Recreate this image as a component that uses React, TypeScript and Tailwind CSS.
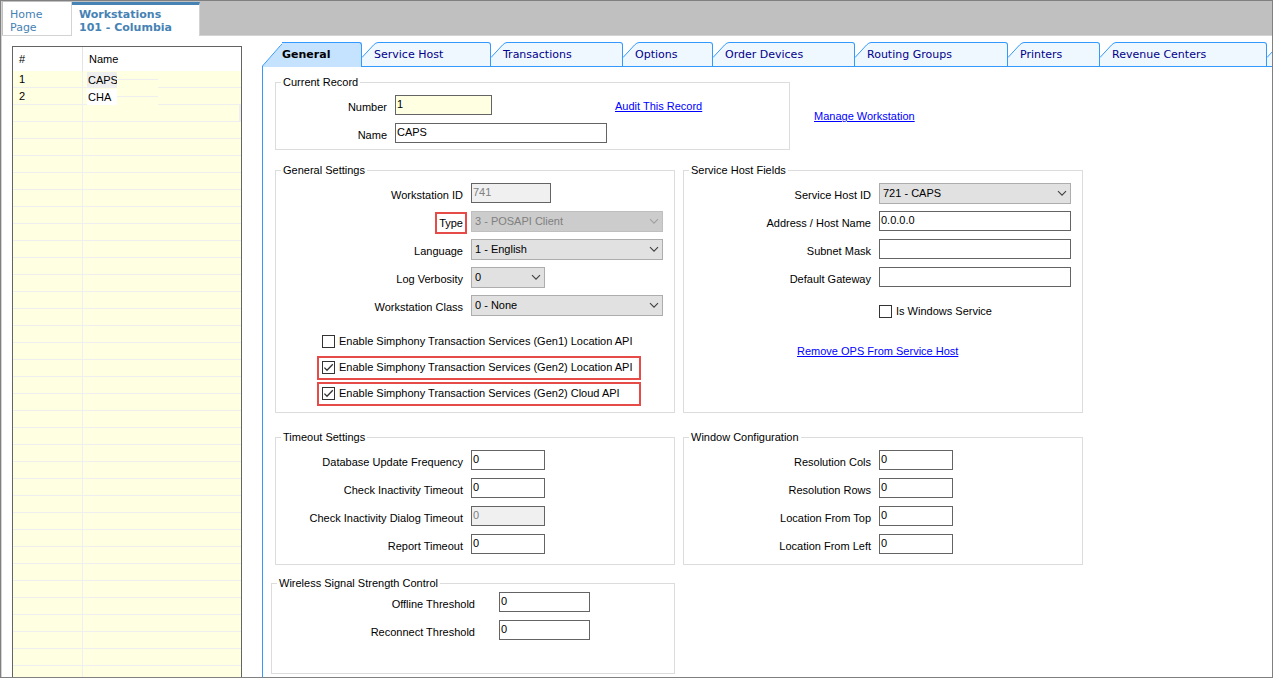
import React, { useState } from 'react';
import clsx from 'clsx';

const TABS = [
  { label: 'Service Host', width: 'w-[129px]' },
  { label: 'Transactions', width: 'w-[132px]' },
  { label: 'Options', width: 'w-[90px]' },
  { label: 'Order Devices', width: 'w-[142px]' },
  { label: 'Routing Groups', width: 'w-[153px]' },
  { label: 'Printers', width: 'w-[92px]' },
  { label: 'Revenue Centers', width: 'w-[167px]' },
  { label: '', width: 'w-[129px]' },
];

const RECORDS = ['CAPS', 'CHA'];
const GRID_ROWS = 60;

function Group({ title, className, children }: { title: string; className?: string; children: React.ReactNode }) {
  return (
    <fieldset className={clsx('min-w-0 border border-[#dcdcdc]', className)}>
      <legend className="ml-[5px] px-0.5 h-3.5 leading-[14px]">{title}</legend>
      {children}
    </fieldset>
  );
}

function Row({
  label, id, cols = 'grid-cols-[187px_1fr] gap-2', highlight, children,
}: {
  label: string;
  id: string;
  cols?: string;
  highlight?: boolean;
  children: React.ReactNode;
}) {
  return (
    <div className={clsx('grid h-5', cols)}>
      <label htmlFor={id} className="pt-[5px] text-right leading-[14px] whitespace-nowrap">
        <span className={clsx('inline-block', highlight && 'outline-2 outline-offset-2 outline-[#e64b47]')}>{label}</span>
      </label>
      {children}
    </div>
  );
}

function TextBox({ id, value = '', width, disabled, tint = 'bg-white' }: {
  id: string;
  value?: string;
  width: string;
  disabled?: boolean;
  tint?: string;
}) {
  return (
    <input
      id={id}
      type="text"
      defaultValue={value}
      disabled={disabled}
      className={clsx(
        'h-5 border border-[#646464] pl-px pb-0.5 outline-none',
        width,
        disabled ? 'bg-[#f0f0f0] text-[#808080]' : tint,
      )}
    />
  );
}

function DropDown({ id, value, width, disabled }: { id: string; value: string; width: string; disabled?: boolean }) {
  return (
    <div className={clsx('relative h-[21px]', width)}>
      <select
        id={id}
        disabled={disabled}
        className={clsx(
          'h-[21px] w-full appearance-none border pl-[3px] outline-none',
          disabled ? 'border-[#bfbfbf] bg-[#cccccc] text-[#808080] opacity-100' : 'border-[#adadad] bg-[#e1e1e1]',
        )}
      >
        <option>{value}</option>
      </select>
      <svg
        className={clsx('pointer-events-none absolute right-1 top-[7px]', disabled ? 'text-[#a0a0a0]' : 'text-[#404040]')}
        width="10" height="7" viewBox="0 0 10 7" fill="none" stroke="currentColor" strokeWidth="1.1"
      >
        <path d="M1 1.2 L5 5.2 L9 1.2" />
      </svg>
    </div>
  );
}

function CheckBox({ label, checked, className }: { label: string; checked?: boolean; className?: string }) {
  const [on, setOn] = useState(!!checked);
  return (
    <label className={clsx('flex items-center whitespace-nowrap', className)}>
      <span className="relative mr-1 h-[13px] w-[13px]">
        <input
          type="checkbox"
          checked={on}
          onChange={() => setOn(v => !v)}
          className="block h-[13px] w-[13px] appearance-none border border-[#333333] bg-white"
        />
        {on && (
          <svg className="pointer-events-none absolute inset-0" width="13" height="13" viewBox="0 0 13 13" fill="none" stroke="#333333" strokeWidth="1.3">
            <path d="M2.4 6.6 L5 9.2 L10.8 3.2" />
          </svg>
        )}
      </span>
      {label}
    </label>
  );
}

function RecordGrid() {
  return (
    <div className="ml-[10px] mt-[10px] w-[230px] shrink-0 overflow-hidden border border-b-0 border-[#646464] bg-[#ffffe1]">
      <table className="w-full table-fixed border-separate border-spacing-0">
        <thead>
          <tr className="h-6 bg-white">
            <th className="w-[70px] border-r border-[#e4e4e4] pl-1.5 text-left font-normal">#</th>
            <th className="pl-1.5 text-left font-normal">Name</th>
          </tr>
        </thead>
        <tbody>
          {Array.from({ length: GRID_ROWS }, (_, i) => (
            <tr key={i} className="h-[17px]">
              <td className="h-[17px] border-b border-r border-[#efefef] p-0 pl-1.5 leading-4">{RECORDS[i] && i + 1}</td>
              <td className={clsx('h-[17px] border-b border-[#efefef] p-0', i === 2 && 'border-r-2')}>
                {RECORDS[i] && (
                  <div className="relative z-10 -mb-px ml-1 flex h-[17px]">
                    <span className={clsx('mt-px w-[30px] pl-px leading-4', i === 0 ? 'bg-[#efefef]' : 'bg-white')}>
                      {RECORDS[i]}
                    </span>
                    <span className="w-[41px] bg-[#ffffe1]">
                      <span className="block h-[9px] border-b border-[#efefef]" />
                    </span>
                  </div>
                )}
              </td>
            </tr>
          ))}
        </tbody>
      </table>
    </div>
  );
}

function TabStrip() {
  return (
    <div role="tablist" className="flex h-[25px] overflow-hidden font-['DejaVu_Sans','Verdana',sans-serif] text-[11px] text-[#00008b]">
      <button role="tab" aria-selected="true" className="flex h-[25px] w-[100px] shrink-0 text-left font-bold text-black">
        <svg className="shrink-0" width="24" height="25" viewBox="0 0 24 25">
          <path d="M0 25 L19 3.5 Q21.5 .5 24 .5 V25 Z" fill="#c5e2ff" />
          <path d="M.5 25 V24 L18.5 3.5 Q21 .5 24 .5" fill="none" stroke="#3399ff" />
        </svg>
        <span className="-ml-1 h-full flex-1 rounded-tr-[3px] border-r border-t border-[#3399ff] bg-[#c5e2ff] leading-[23px]">General</span>
      </button>
      {TABS.map((tab, i) => (
        <button key={i} role="tab" aria-selected="false" aria-label={tab.label || 'More'} className={clsx('flex h-[25px] shrink-0 text-left', tab.width)}>
          <svg className="shrink-0" width="16" height="25" viewBox="0 0 16 25">
            <path d="M0 15.5 L11.5 3 Q14 .5 16 .5 V25 H0 Z" fill="#eff7ff" />
            <path d="M0 15.5 L11.5 3 Q14 .5 16 .5" fill="none" stroke="#3399ff" />
            <path d="M0 24.5 H16" stroke="#3399ff" />
          </svg>
          <span className="h-full flex-1 rounded-tr-[3px] border-b border-r border-t border-[#3399ff] bg-[#eff7ff] leading-[23px] whitespace-nowrap">
            <span className="-ml-1">{tab.label}</span>
          </span>
        </button>
      ))}
      <span className="flex-1 border-b border-[#3399ff]" />
    </div>
  );
}

export default function App() {
  const link = 'text-[#0000ff] underline';

  return (
    <div className="flex h-screen flex-col border border-[#808080] bg-white font-['Liberation_Sans',Arial,sans-serif] text-[11px] text-black">
      <nav className="flex h-[35px] shrink-0 border-b border-l border-[#d3d3d3] bg-[#c0c0c0] pt-px font-['DejaVu_Sans','Verdana',sans-serif] leading-[13px] text-[#4682b4]">
        <a href="#home" className="ml-px w-[69px] border-r border-[#d3d3d3] bg-white pl-[7px] pt-1.5">
          Home<br />Page
        </a>
        <a href="#workstations" className="-mb-px w-32 border-r border-t-3 border-r-[#d3d3d3] border-t-[#4682b4] bg-white pl-[7px] pt-[3px] font-bold">
          Workstations<br />101 - Columbia
        </a>
      </nav>

      <div className="flex min-h-0 flex-1 border-l border-[#d3d3d3]">
        <RecordGrid />

        <main className="ml-5 mt-1.5 flex min-w-0 flex-1 flex-col">
          <TabStrip />

          <div className="min-h-0 flex-1 overflow-hidden border-l border-[#3399ff] pl-3 pt-2">
            <div className="flex">
              <Group title="Current Record" className="w-[515px]">
                <div className="flex pb-1.5 pt-1.5">
                  <div className="flex w-[331px] flex-col gap-2">
                    <Row label="Number" id="number" cols="grid-cols-[111px_1fr] gap-2">
                      <TextBox id="number" value="1" width="w-[97px]" tint="bg-[#ffffe1]" />
                    </Row>
                    <Row label="Name" id="name" cols="grid-cols-[111px_1fr] gap-2">
                      <TextBox id="name" value="CAPS" width="w-[212px]" />
                    </Row>
                  </div>
                  <a href="#audit" className={clsx('ml-2 pt-[3px]', link)}>Audit This Record</a>
                </div>
              </Group>
              <a href="#manage" className={clsx('ml-6 self-center pt-2', link)}>Manage Workstation</a>
            </div>

            <div className="mt-[13px] grid max-w-[808px] grid-cols-2 gap-x-2 gap-y-[17px]">
              <Group title="General Settings">
                <div className="flex flex-col gap-2 pt-1.5">
                  <Row label="Workstation ID" id="ws-id">
                    <TextBox id="ws-id" value="741" width="w-20" disabled />
                  </Row>
                  <Row label="Type" id="type" highlight>
                    <DropDown id="type" value="3 - POSAPI Client" width="w-48" disabled />
                  </Row>
                  <Row label="Language" id="language">
                    <DropDown id="language" value="1 - English" width="w-48" />
                  </Row>
                  <Row label="Log Verbosity" id="verbosity">
                    <DropDown id="verbosity" value="0" width="w-[74px]" />
                  </Row>
                  <Row label="Workstation Class" id="ws-class">
                    <DropDown id="ws-class" value="0 - None" width="w-48" />
                  </Row>
                </div>
                <div className="ml-[41px] mt-[15px] flex w-[324px] flex-col gap-0.5 pb-1.5">
                  <CheckBox label="Enable Simphony Transaction Services (Gen1) Location API" className="h-6 border-2 border-transparent pb-px pl-[3px]" />
                  <CheckBox label="Enable Simphony Transaction Services (Gen2) Location API" checked className="h-6 border-2 border-[#e64b47] pb-px pl-[3px]" />
                  <CheckBox label="Enable Simphony Transaction Services (Gen2) Cloud API" checked className="h-6 border-2 border-[#e64b47] pb-px pl-[3px]" />
                </div>
              </Group>

              <Group title="Service Host Fields">
                <div className="flex flex-col gap-2 pt-1.5">
                  <Row label="Service Host ID" id="host-id">
                    <DropDown id="host-id" value="721 - CAPS" width="w-48" />
                  </Row>
                  <Row label="Address / Host Name" id="host-name">
                    <TextBox id="host-name" value="0.0.0.0" width="w-48" />
                  </Row>
                  <Row label="Subnet Mask" id="subnet">
                    <TextBox id="subnet" width="w-48" />
                  </Row>
                  <Row label="Default Gateway" id="gateway">
                    <TextBox id="gateway" width="w-48" />
                  </Row>
                </div>
                <CheckBox label="Is Windows Service" className="ml-[195px] mt-4 h-4" />
                <a href="#remove-ops" className={clsx('ml-[113px] mt-6 inline-block', link)}>Remove OPS From Service Host</a>
              </Group>

              <Group title="Timeout Settings">
                <div className="flex flex-col gap-2 pb-2.5 pt-1.5">
                  <Row label="Database Update Frequency" id="db-freq">
                    <TextBox id="db-freq" value="0" width="w-[74px]" />
                  </Row>
                  <Row label="Check Inactivity Timeout" id="inactivity">
                    <TextBox id="inactivity" value="0" width="w-[74px]" />
                  </Row>
                  <Row label="Check Inactivity Dialog Timeout" id="inactivity-dialog">
                    <TextBox id="inactivity-dialog" value="0" width="w-[74px]" disabled />
                  </Row>
                  <Row label="Report Timeout" id="report">
                    <TextBox id="report" value="0" width="w-[74px]" />
                  </Row>
                </div>
              </Group>

              <Group title="Window Configuration">
                <div className="flex flex-col gap-2 pb-2.5 pt-1.5">
                  <Row label="Resolution Cols" id="res-cols">
                    <TextBox id="res-cols" value="0" width="w-[74px]" />
                  </Row>
                  <Row label="Resolution Rows" id="res-rows">
                    <TextBox id="res-rows" value="0" width="w-[74px]" />
                  </Row>
                  <Row label="Location From Top" id="loc-top">
                    <TextBox id="loc-top" value="0" width="w-[74px]" />
                  </Row>
                  <Row label="Location From Left" id="loc-left">
                    <TextBox id="loc-left" value="0" width="w-[74px]" />
                  </Row>
                </div>
              </Group>
            </div>

            <Group title="Wireless Signal Strength Control" className="-ml-1 mt-[11px] w-[404px]">
              <div className="flex flex-col gap-2 pb-[33px] pt-0.5">
                <Row label="Offline Threshold" id="offline" cols="grid-cols-[203px_1fr] gap-6">
                  <TextBox id="offline" value="0" width="w-[91px]" />
                </Row>
                <Row label="Reconnect Threshold" id="reconnect" cols="grid-cols-[203px_1fr] gap-6">
                  <TextBox id="reconnect" value="0" width="w-[91px]" />
                </Row>
              </div>
            </Group>
          </div>
        </main>
      </div>
    </div>
  );
}
